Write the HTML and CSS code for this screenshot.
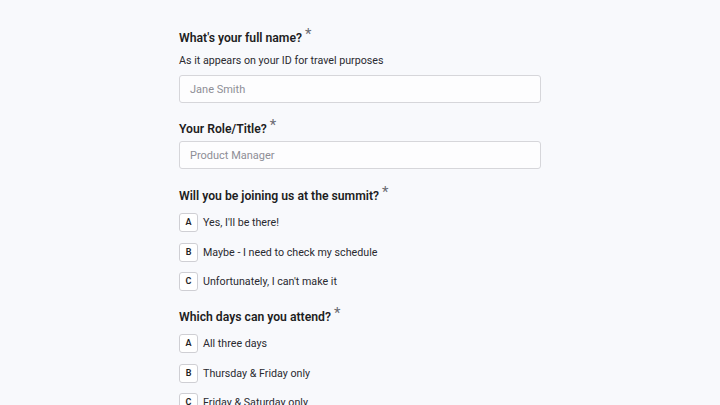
FILE: index.html
```html
<!DOCTYPE html>
<html>
<head>
<meta charset="utf-8">
<link rel="stylesheet" href="styles.css">
</head>
<body>
<main class="form">
  <section class="q">
    <h2 class="q-title">What's your full name? <span class="req">*</span></h2>
    <p class="q-desc">As it appears on your ID for travel purposes</p>
    <div class="input">Jane Smith</div>
  </section>
  <section class="q">
    <h2 class="q-title">Your Role/Title? <span class="req">*</span></h2>
    <div class="input">Product Manager</div>
  </section>
  <section class="q">
    <h2 class="q-title">Will you be joining us at the summit? <span class="req">*</span></h2>
    <ul class="opts">
      <li class="opt"><span class="key">A</span><span>Yes, I'll be there!</span></li>
      <li class="opt"><span class="key">B</span><span>Maybe - I need to check my schedule</span></li>
      <li class="opt"><span class="key">C</span><span>Unfortunately, I can't make it</span></li>
    </ul>
  </section>
  <section class="q">
    <h2 class="q-title">Which days can you attend? <span class="req">*</span></h2>
    <ul class="opts">
      <li class="opt"><span class="key">A</span><span>All three days</span></li>
      <li class="opt"><span class="key">B</span><span>Thursday &amp; Friday only</span></li>
      <li class="opt"><span class="key">C</span><span>Friday &amp; Saturday only</span></li>
    </ul>
  </section>
</main>
</body>
</html>
```
FILE: styles.css
```css
html, body {
  margin: 0;
  padding: 0;
  background: #f8f9fc;
}
body {
  font-family: Roboto, "Liberation Sans", sans-serif;
  color: #1f1f24;
  overflow: hidden;
  height: 405px;
}
.form {
  width: 362px;
  margin: 0 auto;
  padding-top: 29px;
  display: flex;
  flex-direction: column;
  gap: 17px;
}
.q {
  display: flex;
  flex-direction: column;
}
.q-title {
  margin: 0;
  font-size: 12.2px;
  font-weight: 600;
  line-height: 18px;
  color: #1d1d22;
}
.req {
  color: #6b6b73;
  font-size: 15px;
  font-weight: 400;
  vertical-align: 3px;
  line-height: 0;
}
.q-desc {
  margin: 6px 0 0;
  font-size: 10.7px;
  line-height: 16px;
  color: #2a2a30;
}
.input {
  margin-top: 6px;
  height: 28px;
  box-sizing: border-box;
  border: 1.5px solid #d6d6da;
  border-radius: 3px;
  background: #fdfdfe;
  padding: 0 10px;
  display: flex;
  align-items: center;
  font-size: 11px;
  color: #8e8e96;
}
.q-title + .input {
  margin: 3px 0 1px;
}
.opts {
  list-style: none;
  margin: 8px 0 0;
  padding: 0;
  display: flex;
  flex-direction: column;
  gap: 10.5px;
}
.opt {
  display: flex;
  align-items: center;
  gap: 5px;
  font-size: 10.7px;
  line-height: 19px;
  color: #2a2a30;
}
.key {
  width: 19px;
  height: 19px;
  box-sizing: border-box;
  border: 1px solid #cfcfd4;
  border-radius: 3px;
  background: #ffffff;
  display: flex;
  align-items: center;
  justify-content: center;
  font-size: 9px;
  font-weight: 600;
  color: #222;
}
```
